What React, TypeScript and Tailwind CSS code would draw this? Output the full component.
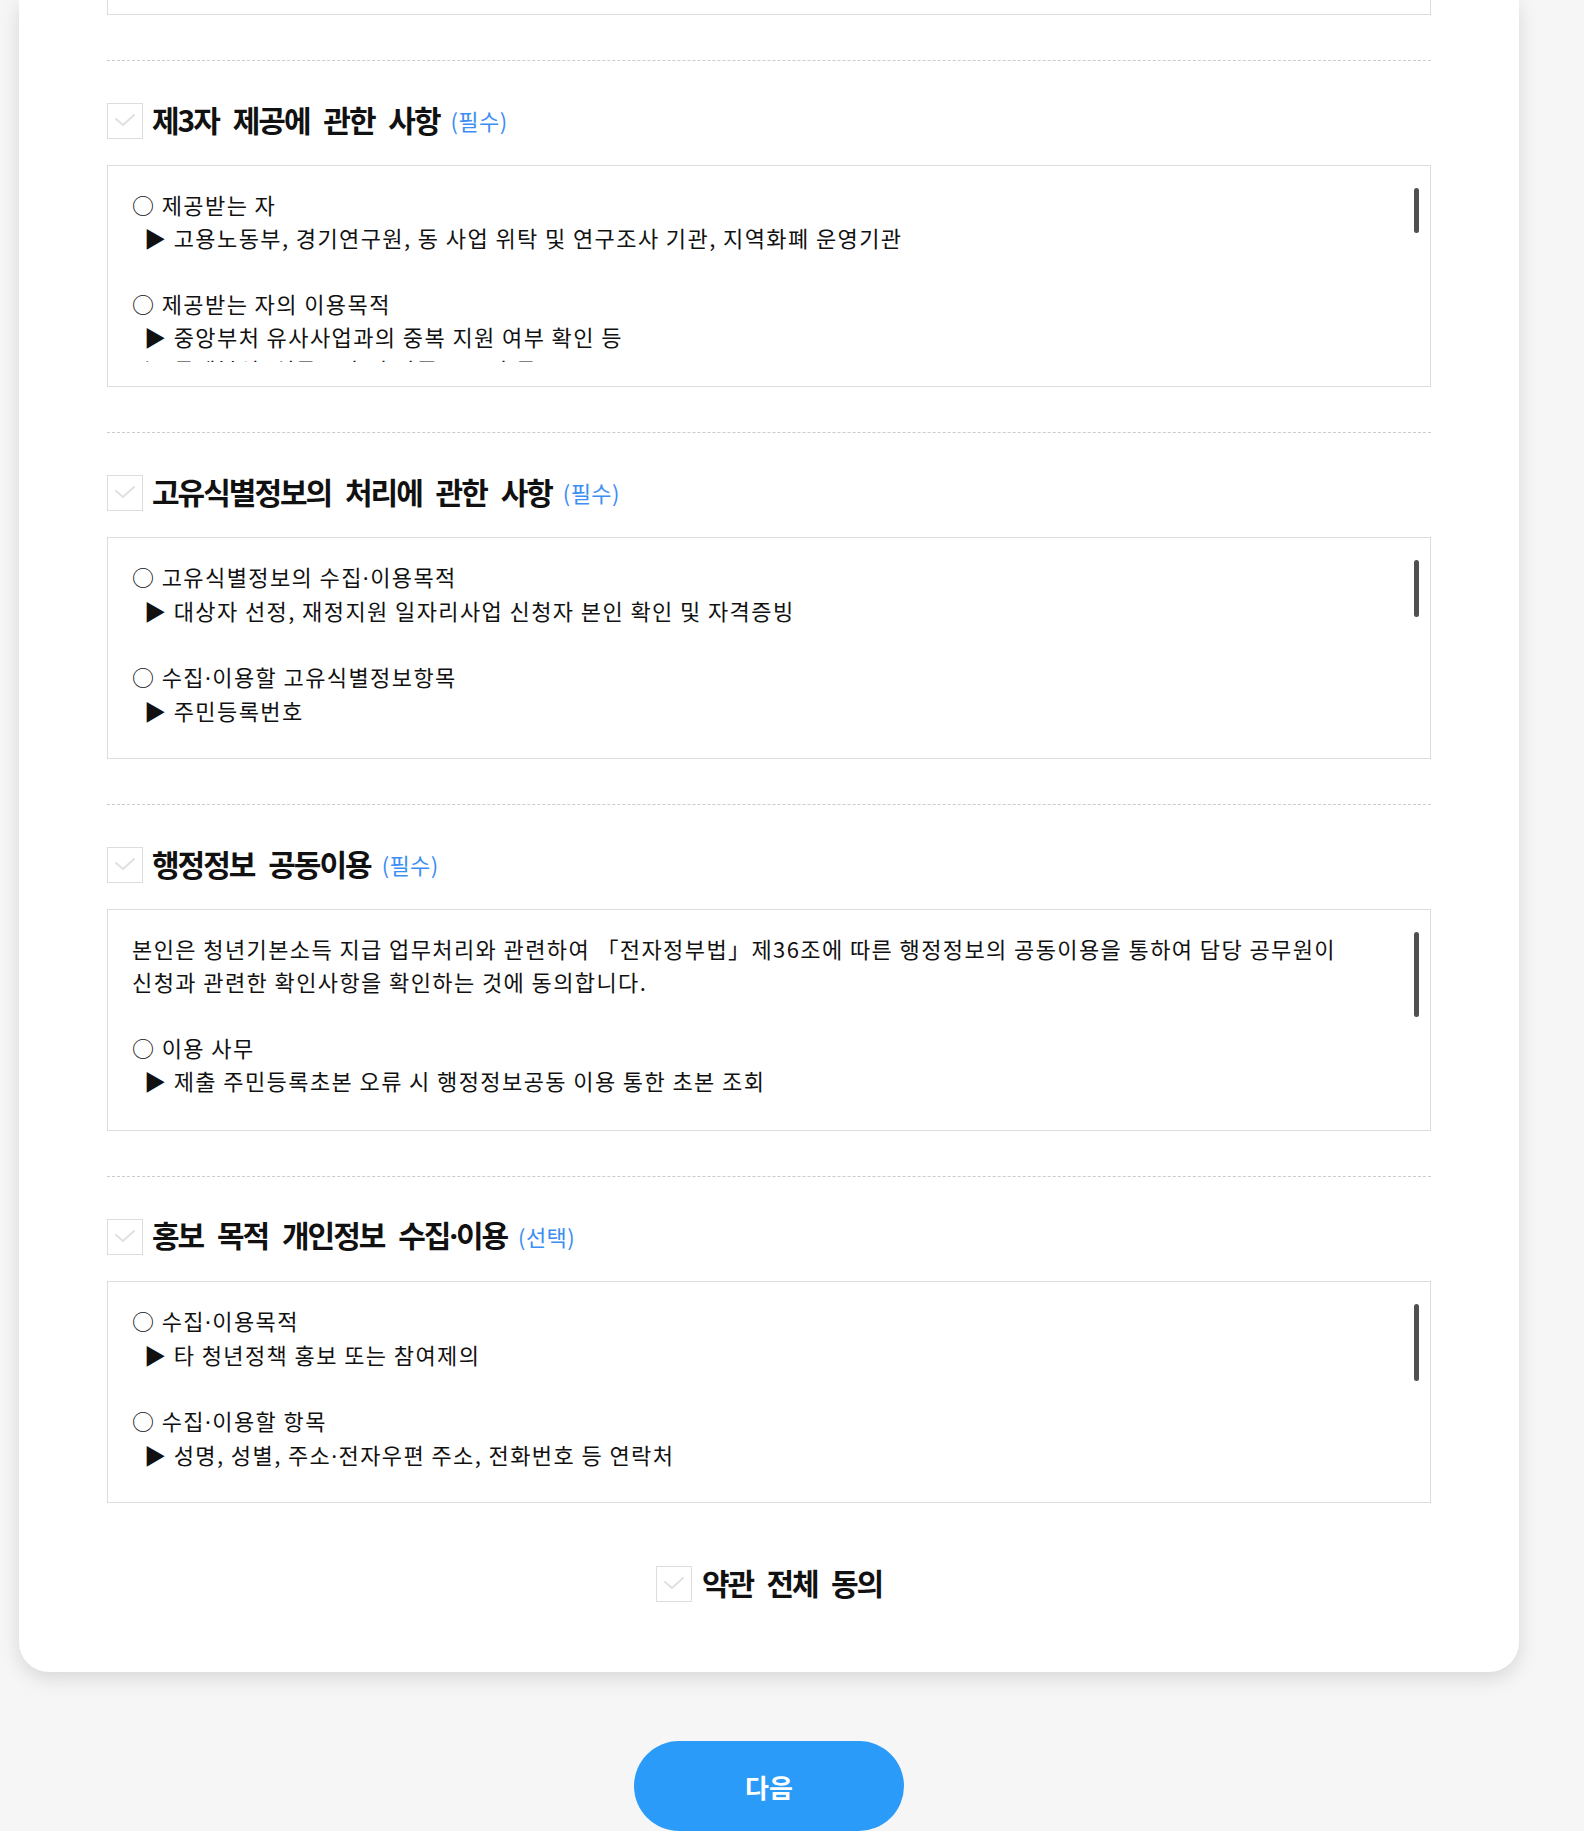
import React from "react";

type Line =
  | { kind: "circle"; text: string }
  | { kind: "arrow"; text: string }
  | { kind: "text"; text: string }
  | { kind: "blank" };

type Section = {
  title: string;
  tag: string;
  thumb: number;
  lines: Line[];
};

const sections: Section[] = [
  {
    title: "제3자 제공에 관한 사항",
    tag: "(필수)",
    thumb: 45,
    lines: [
      { kind: "circle", text: "제공받는 자" },
      { kind: "arrow", text: "고용노동부, 경기연구원, 동 사업 위탁 및 연구조사 기관, 지역화폐 운영기관" },
      { kind: "blank" },
      { kind: "circle", text: "제공받는 자의 이용목적" },
      { kind: "arrow", text: "중앙부처 유사사업과의 중복 지원 여부 확인 등" },
      { kind: "arrow", text: "통계분석, 설문조사 및 만족도 조사 등" },
    ],
  },
  {
    title: "고유식별정보의 처리에 관한 사항",
    tag: "(필수)",
    thumb: 57,
    lines: [
      { kind: "circle", text: "고유식별정보의 수집·이용목적" },
      { kind: "arrow", text: "대상자 선정, 재정지원 일자리사업 신청자 본인 확인 및 자격증빙" },
      { kind: "blank" },
      { kind: "circle", text: "수집·이용할 고유식별정보항목" },
      { kind: "arrow", text: "주민등록번호" },
    ],
  },
  {
    title: "행정정보 공동이용",
    tag: "(필수)",
    thumb: 85,
    lines: [
      {
        kind: "text",
        text: "본인은 청년기본소득 지급 업무처리와 관련하여 「전자정부법」제36조에 따른 행정정보의 공동이용을 통하여 담당 공무원이",
      },
      { kind: "text", text: "신청과 관련한 확인사항을 확인하는 것에 동의합니다." },
      { kind: "blank" },
      { kind: "circle", text: "이용 사무" },
      { kind: "arrow", text: "제출 주민등록초본 오류 시 행정정보공동 이용 통한 초본 조회" },
    ],
  },
  {
    title: "홍보 목적 개인정보 수집·이용",
    tag: "(선택)",
    thumb: 77,
    lines: [
      { kind: "circle", text: "수집·이용목적" },
      { kind: "arrow", text: "타 청년정책 홍보 또는 참여제의" },
      { kind: "blank" },
      { kind: "circle", text: "수집·이용할 항목" },
      { kind: "arrow", text: "성명, 성별, 주소·전자우편 주소, 전화번호 등 연락처" },
    ],
  },
];

// the CJK font draws "·" full width; the page shows a narrow one
const Txt: React.FC<{ text: string }> = ({ text }) => {
  const parts = text.split("·");
  return (
    <>
      {parts.map((p, i) => (
        <React.Fragment key={i}>
          {i > 0 && <span className="font-['Noto_Sans']">·</span>}
          {p}
        </React.Fragment>
      ))}
    </>
  );
};

const CheckBox: React.FC = () => (
  <div className="w-[36px] h-[36px] shrink-0 border border-[#dddddd] bg-white">
    <svg width="34" height="34" viewBox="0 0 34 34" fill="none">
      <polyline
        points="8,15 15,21 26,11"
        stroke="#e0e0e0"
        strokeWidth="2"
        strokeLinecap="round"
        strokeLinejoin="round"
      />
    </svg>
  </div>
);

const TermsLine: React.FC<{ line: Line }> = ({ line }) => {
  if (line.kind === "blank") return <div className="h-[33px]" />;
  if (line.kind === "circle")
    return (
      <div className="whitespace-nowrap">
        ○ <Txt text={line.text} />
      </div>
    );
  if (line.kind === "arrow")
    return (
      <div className="pl-[12px] whitespace-nowrap">
        ▶ <Txt text={line.text} />
      </div>
    );
  return <div className="whitespace-nowrap">{line.text}</div>;
};

const TermsSection: React.FC<{ section: Section }> = ({ section }) => (
  <div className="mt-[45px] border-t border-dashed border-[#cccccc] pt-[42px]">
    <div className="flex items-center h-[36px]">
      <CheckBox />
      <h3 className="ml-[9px] pb-[4px] text-[30px] leading-[36px] font-bold tracking-[-2px] text-[#111111] [word-spacing:9px]">
        <Txt text={section.title} />
      </h3>
      <span className="ml-[11px] pb-[3px] text-[22px] leading-[36px] tracking-[0.4px] text-[#3b8ef3]">
        {section.tag}
      </span>
    </div>

    {/* content box with its own scroll thumb */}
    <div className="mt-[26px] flex border border-[#dddddd] pt-[22px] pb-[24px] pl-[24px] pr-[11px]">
      <div className="flex-1 h-[174px] overflow-hidden text-[22px] leading-[33px] tracking-[1.4px] text-[#111111]">
        {section.lines.map((line, i) => (
          <TermsLine key={i} line={line} />
        ))}
      </div>
      <div className="w-[5px]">
        <div className="rounded-full bg-[#505050]" style={{ height: section.thumb }} />
      </div>
    </div>
  </div>
);

export default function App() {
  return (
    <div
      className="min-h-screen bg-[#f6f6f6] pb-[4px]"
      style={{ fontFamily: '"Noto Sans CJK KR", "Noto Sans", sans-serif' }}
    >
      <div className="ml-[19px] w-[1500px] bg-white rounded-b-[30px] shadow-[0_6px_20px_rgba(0,0,0,0.13)] px-[88px] pb-[68px]">
        {/* tail of the previous terms box */}
        <div className="h-[15px] border-x border-b border-[#dddddd]" />

        {sections.map((s) => (
          <TermsSection key={s.title} section={s} />
        ))}

        <div className="mt-[61px] flex justify-center items-center">
          <CheckBox />
          <span className="ml-[10px] pb-[4px] text-[30px] leading-[36px] font-bold tracking-[-2px] text-[#111111] [word-spacing:8.5px]">
            약관 전체 동의
          </span>
        </div>
      </div>

      <div className="ml-[19px] w-[1500px] flex justify-center mt-[69px]">
        <button className="w-[270px] h-[90px] rounded-full bg-[#2b9bf9] text-white text-[26px] font-bold">
          다음
        </button>
      </div>
    </div>
  );
}
